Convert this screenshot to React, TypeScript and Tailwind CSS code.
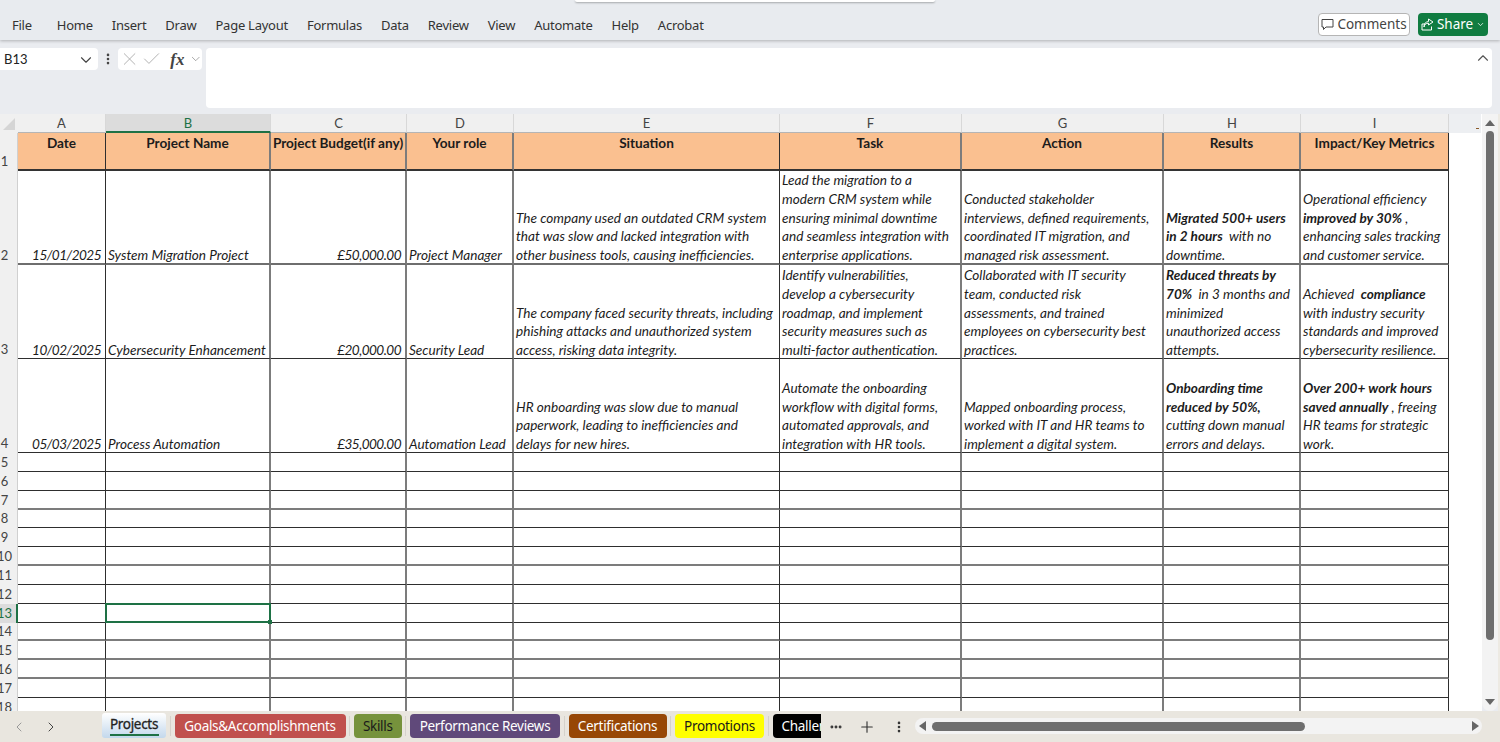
import React from 'react';
import { ChevronDown, ChevronUp, ChevronLeft, ChevronRight, X, Check, Plus, MoreVertical, MoreHorizontal } from 'lucide-react';

const menuItems = ['Home', 'Insert', 'Draw', 'Page Layout', 'Formulas', 'Data', 'Review', 'View', 'Automate', 'Help', 'Acrobat'];

// column letters with their right border
const columns = [
  { label: 'A', border: 'border-r border-r-[#2e2e2e]' },
  { label: 'B', border: 'border-r-2 border-r-[#7c7c7c]' },
  { label: 'C', border: 'border-r-2 border-r-[#7c7c7c]' },
  { label: 'D', border: 'border-r-2 border-r-[#7c7c7c]' },
  { label: 'E', border: 'border-r border-r-[#2e2e2e]' },
  { label: 'F', border: 'border-r-2 border-r-[#7c7c7c]' },
  { label: 'G', border: 'border-r-2 border-r-[#7c7c7c]' },
  { label: 'H', border: 'border-r-2 border-r-[#7c7c7c]' },
  { label: 'I', border: 'border-r border-r-[#2e2e2e]' },
];

const headers = ['Date', 'Project Name', 'Project Budget(if any)', 'Your role', 'Situation', 'Task', 'Action', 'Results', 'Impact/Key Metrics'];

const b = (t: string) => <b className="font-bold">{t}</b>;

const rows: React.ReactNode[][] = [
  [
    '15/01/2025',
    'System Migration Project',
    '£50,000.00',
    'Project Manager',
    <>The company used an outdated CRM system<br />that was slow and lacked integration with<br />other business tools, causing inefficiencies.</>,
    <>Lead the migration to a<br />modern CRM system while<br />ensuring minimal downtime<br />and seamless integration with<br />enterprise applications.</>,
    <>Conducted stakeholder<br />interviews, defined requirements,<br />coordinated IT migration, and<br />managed risk assessment.</>,
    <>{b('Migrated 500+ users')}<br />{b('in 2 hours')}&nbsp; with no<br />downtime.</>,
    <>Operational efficiency<br />{b('improved by 30%')} ,<br />enhancing sales tracking<br />and customer service.</>,
  ],
  [
    '10/02/2025',
    'Cybersecurity Enhancement',
    '£20,000.00',
    'Security Lead',
    <>The company faced security threats, including<br />phishing attacks and unauthorized system<br />access, risking data integrity.</>,
    <>Identify vulnerabilities,<br />develop a cybersecurity<br />roadmap, and implement<br />security measures such as<br />multi-factor authentication.</>,
    <>Collaborated with IT security<br />team, conducted risk<br />assessments, and trained<br />employees on cybersecurity best<br />practices.</>,
    <>{b('Reduced threats by')}<br />{b('70%')}&nbsp; in 3 months and<br />minimized<br />unauthorized access<br />attempts.</>,
    <>Achieved&nbsp; {b('compliance')}<br />with industry security<br />standards and improved<br />cybersecurity resilience.</>,
  ],
  [
    '05/03/2025',
    'Process Automation',
    '£35,000.00',
    'Automation Lead',
    <>HR onboarding was slow due to manual<br />paperwork, leading to inefficiencies and<br />delays for new hires.</>,
    <>Automate the onboarding<br />workflow with digital forms,<br />automated approvals, and<br />integration with HR tools.</>,
    <>Mapped onboarding process,<br />worked with IT and HR teams to<br />implement a digital system.</>,
    <>{b('Onboarding time')}<br />{b('reduced by 50%,')}<br />cutting down manual<br />errors and delays.</>,
    <>{b('Over 200+ work hours')}<br />{b('saved annually')} , freeing<br />HR teams for strategic<br />work.</>,
  ],
];

const emptyRows = [5, 6, 7, 8, 9, 10, 11, 12, 13, 14, 15, 16, 17, 18];
const grayLines = [7, 10, 14, 15, 16];

const tabs = [
  { name: 'Goals&Accomplishments', cls: 'w-[171px] justify-center bg-[#c0504d] text-white' },
  { name: 'Skills', cls: 'w-[47.5px] justify-center bg-[#76923c] text-[#1a1a1a]' },
  { name: 'Performance Reviews', cls: 'w-[150px] justify-center bg-[#60497a] text-white' },
  { name: 'Certifications', cls: 'w-[98px] justify-center bg-[#974706] text-white' },
  { name: 'Promotions', cls: 'w-[89px] justify-center bg-[#ffff00] text-[#1a1a1a]' },
  { name: 'Challenges', cls: 'w-[90px] pl-[9px] bg-black text-white' },
];

const RowHead = ({ n, selected = false }: { n: number; selected?: boolean }) => (
  <div className={`flex items-end overflow-hidden pb-px leading-[17px] text-[13px] ${selected ? 'bg-[#dcdcdc] text-[#1e7145] border-r-2 border-r-[#1e7145]' : 'bg-[#f0f0f0] text-[#444] border-r border-r-[#d0d0d0]'}`}>
    <span className="flex w-[9px] shrink-0 justify-center whitespace-nowrap">{n}</span>
  </div>
);

export default function App() {
  return (
    <div className="relative flex h-[742px] w-[1500px] flex-col overflow-hidden bg-[#eaecf0] font-['Lato',sans-serif]">
      <div className="absolute left-[575px] top-0 z-20 h-[2px] w-[360px] rounded-b bg-white shadow-[0_1px_2px_rgba(0,0,0,0.3)]" />

      {/* Menu bar */}
      <div className="z-10 flex h-[40px] shrink-0 items-center bg-[#e8ebef] pl-[12px] pr-[12px] font-['Noto_Sans',sans-serif] text-[13.5px] text-[#333] shadow-[0_1px_3px_rgba(0,0,0,0.25)]">
        <span className="mr-[25px] mt-[11px] text-[13px] tracking-[-0.25px]">File</span>
        <div className="mt-[11px] flex gap-[19px] text-[13px] tracking-[-0.25px]">
          {menuItems.map((m) => (
            <span key={m}>{m}</span>
          ))}
        </div>
        <div className="ml-auto flex items-center gap-[8px] self-start pt-[13px]">
          <button className="flex h-[23px] w-[92px] items-center justify-center gap-[3px] rounded-[4px] border border-[#b5b5b5] bg-white text-[#444]">
            <svg width="13" height="13" viewBox="0 0 13 13" fill="none" stroke="#444" strokeWidth="1">
              <path d="M1 1.5h11v7.5H5L2.5 11.5V9H1z" />
            </svg>
            Comments
          </button>
          <button className="flex h-[23px] w-[70px] items-center justify-center gap-[3px] rounded-[4px] bg-[#107c41] text-white">
            <svg width="13" height="13" viewBox="0 0 13 13" fill="none" stroke="white" strokeWidth="1">
              <path d="M1 6v6h9.500V8.500M1 6h3M7.500 1l4.500 3-4.500 3V5.200C5 5.200 3.500 6.500 3 9c-.2-3 1.500-5.200 4.500-5.500z" />
            </svg>
            Share
            <ChevronDown size={9} strokeWidth={2} />
          </button>
        </div>
      </div>

      {/* Formula bar */}
      <div className="flex h-[74px] shrink-0 items-start bg-[#eaecf0] pt-[8px]">
        <div className="flex h-[22px] w-[98px] items-center justify-between rounded-r-[4px] bg-white pl-[4px] pr-[3px] pt-px text-[13px] text-[#222]">
          B13
          <ChevronDown size={18} strokeWidth={1.5} className="text-[#444]" />
        </div>
        <div className="flex w-[20px] justify-center pt-[4px]">
          <MoreVertical size={14} strokeWidth={2.5} className="text-[#444]" />
        </div>
        <div className="flex h-[22px] w-[84px] items-center gap-px rounded-[4px] bg-white pl-px text-[#a8a8a8]">
          <X size={22} strokeWidth={1} />
          <Check size={22} strokeWidth={1} />
          <span className="ml-[7px] font-['Liberation_Serif',serif] text-[17px] font-bold italic leading-none text-[#444]">fx</span>
          <ChevronDown size={14} strokeWidth={1} className="ml-[3px] text-[#666]" />
        </div>
        <div className="relative ml-[4px] h-[60px] w-[1286px] rounded-[4px] bg-white">
          <ChevronUp size={18} strokeWidth={1.5} className="absolute right-[0px] top-[1px] text-[#555]" />
        </div>
      </div>

      {/* Sheet */}
      <div className="flex min-h-0 flex-1">
        <div className="w-[1482px] overflow-hidden bg-white">
          <div className="grid grid-cols-[18px_88px_165px_136px_107px_266px_182px_202px_137px_148px_32px] grid-rows-[19px_38px_94px_94px_94px_repeat(14,18.85px)] text-[13.6px] leading-[18.8px] text-[#1c1c1c]">
            {/* column letters */}
            <div className="flex items-end bg-[#f0f0f0]">
              <svg width="14" height="14" viewBox="0 0 14 14" className="mb-[2px] ml-[2px]">
                <path d="M13 1v12H1z" fill="#d5d5d5" />
              </svg>
            </div>
            {columns.map((c) => (
              <div
                key={c.label}
                className={`flex items-center justify-center border-r border-r-[#d8d8d8] pt-px text-[13px] ${c.label === 'B' ? 'border-b-2 border-b-[#1e7145] bg-[#dcdcdc] text-[#1e7145]' : 'border-b border-b-[#b5b5b5] bg-[#f0f0f0] text-[#444]'}`}
              >
                {c.label}
              </div>
            ))}
            <div className="flex items-end justify-end bg-[#edeff2] pb-[4px] pr-[2px]">
              <span className="h-px w-[3px] bg-[#8a5a2b]" />
            </div>

            {/* header row */}
            <RowHead n={1} />
            {headers.map((h, i) => (
              <div key={h} className={`whitespace-nowrap border-b-2 border-b-[#333] bg-[#fac090] pt-px text-center font-bold ${columns[i].border}`}>
                {h}
              </div>
            ))}
            <div />

            {/* data rows */}
            {rows.map((row, r) => (
              <React.Fragment key={r}>
                <RowHead n={r + 2} />
                {row.map((cell, i) => (
                  <div
                    key={i}
                    className={`flex flex-col justify-end whitespace-nowrap italic ${i === 0 || i === 2 ? 'pr-[4px] text-right tracking-[-0.55px]' : 'px-[2px]'} ${r === 0 ? 'border-b-2 border-b-[#6e6e6e]' : 'border-b border-b-[#2e2e2e]'} ${columns[i].border}`}
                  >
                    <div className="-mb-[2px]">{cell}</div>
                  </div>
                ))}
                <div />
              </React.Fragment>
            ))}

            {/* empty rows */}
            {emptyRows.map((n) => (
              <React.Fragment key={n}>
                <RowHead n={n} selected={n === 13} />
                {columns.map((c) => (
                  <div
                    key={c.label}
                    className={`relative ${grayLines.includes(n) ? 'border-b-2 border-b-[#7c7c7c]' : 'border-b border-b-[#2e2e2e]'} ${c.border}`}
                  >
                    {n === 13 && c.label === 'B' && (
                      <div className="absolute -left-px -top-px bottom-[-1px] right-[-2px] z-10 border-2 border-[#1e7145]">
                        <span className="absolute -bottom-[3px] -right-[3px] h-[4px] w-[4px] bg-[#1e7145]" />
                      </div>
                    )}
                  </div>
                ))}
                <div />
              </React.Fragment>
            ))}
          </div>
        </div>

        {/* vertical scrollbar */}
        <div className="flex w-[16px] flex-col items-center rounded-b-[8px] bg-[#f3f3f3] py-[6px]">
          <svg width="10" height="6" viewBox="0 0 10 6" className="shrink-0">
            <path d="M5 0l5 6H0z" fill="#666" />
          </svg>
          <div className="mt-[5px] h-[509px] w-[8px] shrink-0 rounded-full bg-[#6e6e6e]" />
          <svg width="10" height="6" viewBox="0 0 10 6" className="mt-auto shrink-0">
            <path d="M5 6L0 0h10z" fill="#666" />
          </svg>
        </div>
        <div className="w-[2px] bg-[#edeae3]" />
      </div>

      {/* Sheet tabs */}
      <div className="flex h-[31px] shrink-0 items-start bg-[#e9e6df] pt-[2px] font-['Noto_Sans',sans-serif] text-[13.5px] tracking-[-0.3px]">
        <div className="flex w-[102px] shrink-0 items-center pl-[11px] pt-[6px] text-[#999]">
          <ChevronLeft size={16} strokeWidth={1.5} />
          <ChevronRight size={16} strokeWidth={1.5} className="ml-[16px] text-[#444]" />
        </div>
        <div className="flex w-[719px] shrink-0 items-start gap-[3.75px] overflow-hidden">
          <div className="relative flex h-[25px] w-[64px] shrink-0 justify-center rounded-[3px] bg-gradient-to-b from-white to-[#c3d8ec] pt-[1px] text-[#222] [-webkit-text-stroke:0.3px_#222]">
            Projects
            <span className="absolute bottom-[2px] left-[8px] right-[7px] h-[2px] bg-[#1e7145]" />
          </div>
          {tabs.map((t) => (
            <React.Fragment key={t.name}>
              <span className="mt-[3px] h-[20px] w-px shrink-0 bg-[#d5d2cb]" />
              <div className={`mt-px flex h-[24px] shrink-0 items-center overflow-hidden whitespace-nowrap rounded-[4px] pt-px ${t.cls}`}>{t.name}</div>
            </React.Fragment>
          ))}
        </div>
        <div className="flex w-[94px] shrink-0 items-center pl-[8px] pt-[5px] text-[#333]">
          <MoreHorizontal size={14} strokeWidth={3} />
          <Plus size={18} strokeWidth={1.5} className="ml-[15px]" />
          <MoreVertical size={14} strokeWidth={2.5} className="ml-[16px]" />
        </div>
        <div className="mt-[5px] flex h-[16px] w-[567px] shrink-0 items-center rounded-full bg-[#f3f3f3] pl-[4px] pr-[3px]">
          <svg width="7" height="10" viewBox="0 0 7 10" className="shrink-0">
            <path d="M0 5l7-5v10z" fill="#666" />
          </svg>
          <div className="ml-[6px] h-[9px] w-[373px] rounded-full bg-[#6e6e6e]" />
          <svg width="7" height="10" viewBox="0 0 7 10" className="ml-auto shrink-0">
            <path d="M7 5L0 0v10z" fill="#666" />
          </svg>
        </div>
      </div>
    </div>
  );
}
